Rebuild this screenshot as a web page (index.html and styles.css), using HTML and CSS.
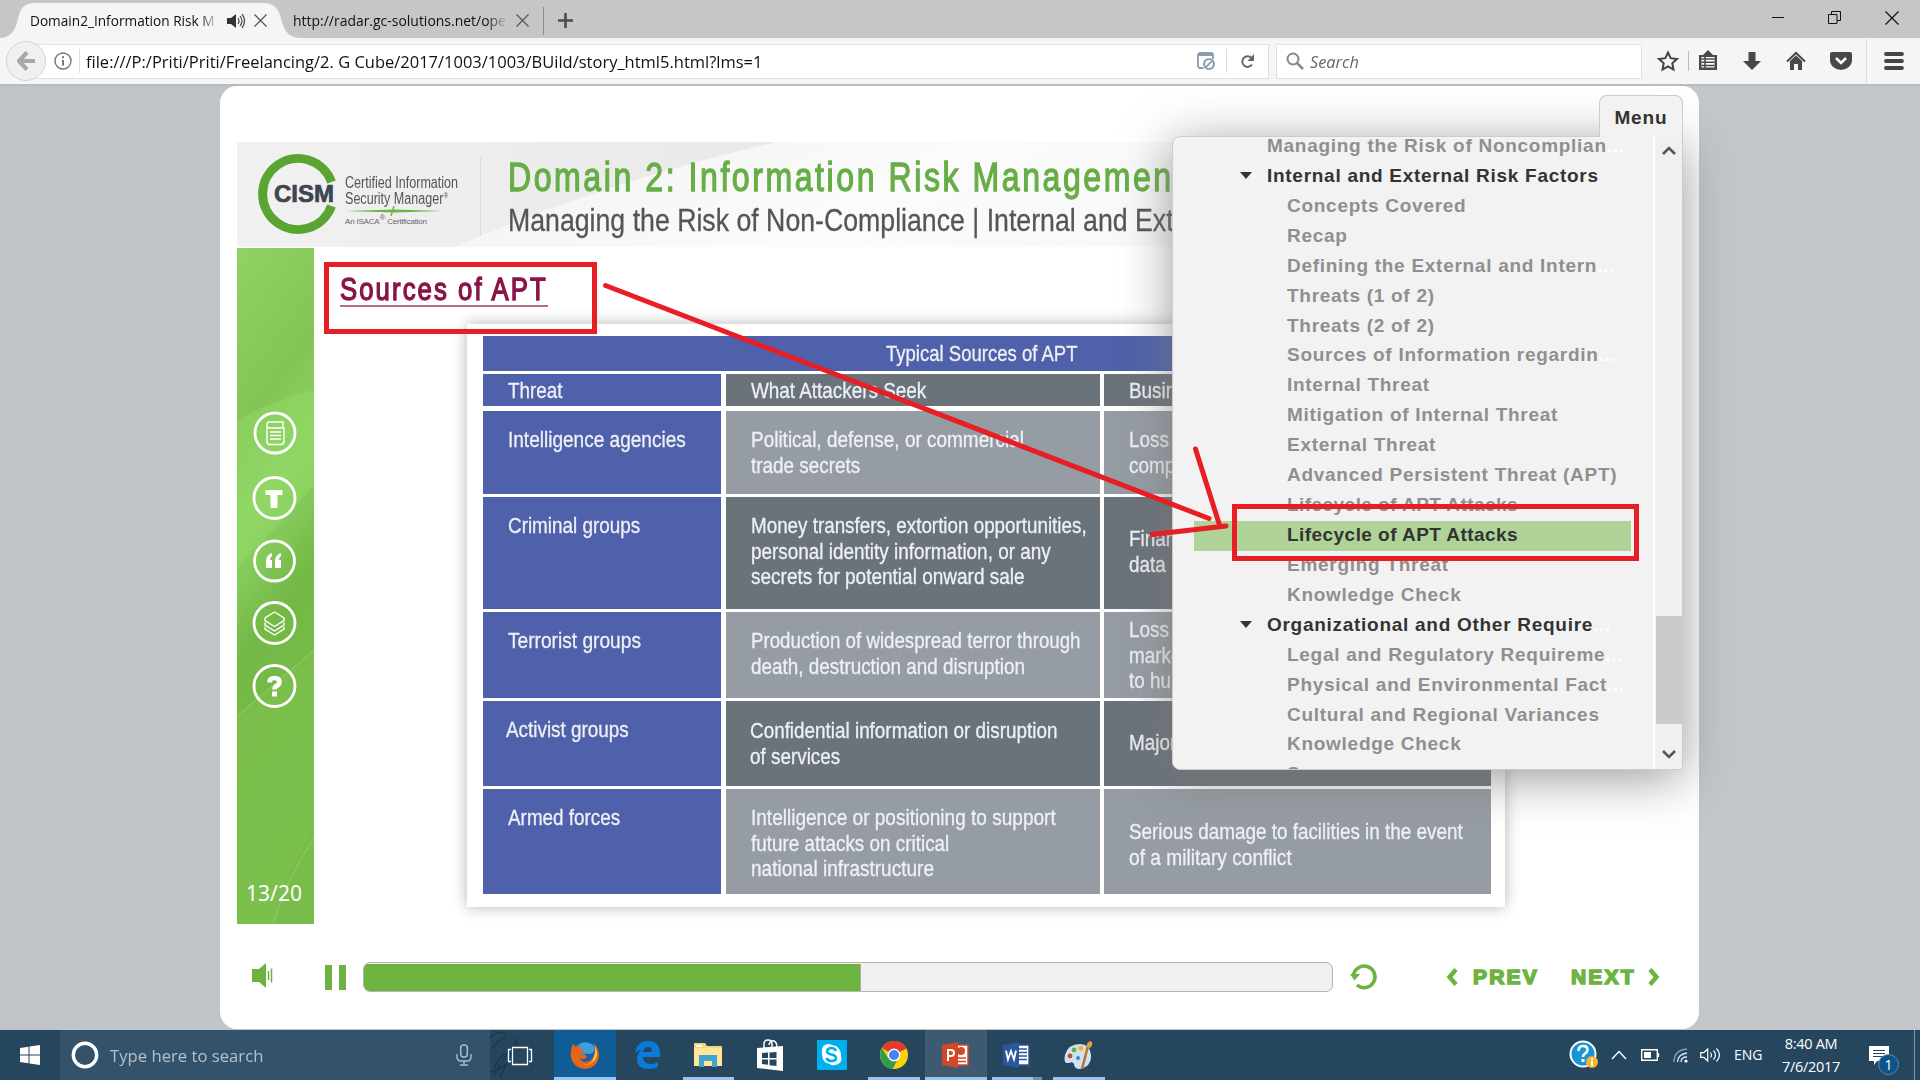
FILE: index.html
```html
<!DOCTYPE html>
<html lang="en">
<head>
<meta charset="utf-8">
<title>Domain2_Information Risk Management</title>
<link rel="stylesheet" href="styles.css">
</head>
<body>
<header class="tabs">
  <svg class="tabshape" width="306" height="35" viewBox="0 0 306 35"><path d="M0 35C14 34 16 24 19 12Q22 0 34 0H264Q276 0 280 12C284 26 286 34 300 35Z" fill="#f5f5f5"/></svg>
  <div class="tab first"><span class="tabtext fade1"><span class="ui" style="--s:.91">Domain2_Information Risk M</span></span>
    <svg width="18" height="14" viewBox="0 0 18 14"><path d="M0 4h4l5-4v14l-5-4H0z" fill="#333"/><path d="M11 4q2 3 0 6M13 2q4 5 0 10M15 0q5 7 0 14" fill="none" stroke="#444" stroke-width="1.2"/></svg>
    <svg class="x" width="13" height="13" viewBox="0 0 13 13"><path d="M.5.5l12 12M12.500.5l-12 12" stroke="#555" stroke-width="1.3"/></svg></div>
  <div class="tab second"><span class="tabtext fade2"><span class="ui" style="--s:.93">http://radar.gc-solutions.net/ope</span></span>
    <svg class="x" width="13" height="13" viewBox="0 0 13 13"><path d="M.5.5l12 12M12.500.5l-12 12" stroke="#555" stroke-width="1.3"/></svg></div>
  <svg class="plus" width="15" height="15" viewBox="0 0 15 15"><path d="M7.500 0v15M0 7.500h15" stroke="#4d4d4d" stroke-width="2.600"/></svg>
  <div class="win">
    <svg width="12" height="12" viewBox="0 0 12 12"><path d="M0 5.500h12" stroke="#111"/></svg>
    <svg width="13" height="13" viewBox="0 0 13 13"><path d="M.5 3.500h8.500v9H.5zM3.500 3.500V.5h9v9H9" fill="none" stroke="#111"/></svg>
    <svg width="14" height="14" viewBox="0 0 14 14"><path d="M.5.5l13 13M13.500.5l-13 13" stroke="#111" stroke-width="1.2"/></svg>
  </div>
</header>
<nav class="toolbar">
  <div class="back"><svg width="18" height="20" viewBox="0 0 18 20"><path d="M10 1.500L2 10l8 8.500M2.500 10H18" fill="none" stroke="#a8a8a8" stroke-width="4.200"/></svg></div>
  <div class="url">
    <svg width="18" height="18" viewBox="0 0 18 18"><circle cx="9" cy="9" r="8" fill="none" stroke="#777" stroke-width="1.400"/><path d="M9 8v5.500M9 4.200v2" stroke="#777" stroke-width="2"/></svg>
    <i class="sep"></i>
    <span class="urltext"><span class="ui" style="--s:.97">file:///P:/Priti/Priti/Freelancing/2. G Cube/2017/1003/1003/BUild/story_html5.html?lms=1</span></span>
    <svg class="push" width="18" height="18" viewBox="0 0 18 18"><path d="M6.500 16H3a2 2 0 0 1-2-2V3a2 2 0 0 1 2-2h11a2 2 0 0 1 2 2v4" fill="none" stroke="#8a9baa" stroke-width="1.800"/><path d="M1 1h15v3H1z" fill="#8a9baa"/><circle cx="12" cy="12" r="5" fill="#f2f5f8" stroke="#8091a1" stroke-width="1.700"/><path d="M9 15l6-6" stroke="#8091a1" stroke-width="1.500"/></svg>
    <i class="sep s2"></i>
    <svg class="reload" width="15" height="15" viewBox="0 0 15 15"><path d="M12 10.500A5.300 5.300 0 1 1 11.500 4" fill="none" stroke="#666" stroke-width="2"/><path d="M14 0v7H7.500z" fill="#666"/></svg>
  </div>
  <div class="search">
    <svg width="18" height="18" viewBox="0 0 18 18"><circle cx="7" cy="7" r="5.500" fill="none" stroke="#888" stroke-width="2"/><path d="M11 11l6 6" stroke="#888" stroke-width="2.500"/></svg>
    <span class="ui" style="--s:.96">Search</span>
  </div>
  <div class="tools">
    <svg width="22" height="22" viewBox="0 0 22 22"><path d="M11 2.500l2.700 5.700 6.200.8-4.600 4.300 1.200 6.200L11 16.400l-5.500 3.100 1.200-6.200L2.100 9l6.200-.8z" fill="none" stroke="#444" stroke-width="2"/></svg>
    <i class="tsep"></i>
    <svg width="20" height="22" viewBox="0 0 20 22"><path d="M1 5h4l5-5 5 5h4v15H1z" fill="#484848"/><path d="M3.500 7h13v10.500h-13z" fill="#fff"/><path d="M3.500 9h13M3.500 12.200h13M3.500 15.400h13M7 7v11" stroke="#484848" stroke-width="1.500"/></svg>
    <svg class="g1" width="18" height="20" viewBox="0 0 18 20"><path d="M5.500 1h7v9H18l-9 9-9-9h5.500z" fill="#484848"/></svg>
    <svg class="g2" width="20" height="20" viewBox="0 0 20 20"><path d="M1 10.500L10 2l9 8.500" fill="none" stroke="#484848" stroke-width="2"/><path d="M4 10l6-5.500 6 5.500v9h-4v-6H8v6H4z" fill="#484848"/></svg>
    <svg class="g3" width="22" height="20" viewBox="0 0 22 20"><path d="M2 1h18q2 0 2 2v6a11 10 0 0 1-22 0V3q0-2 2-2z" fill="#484848"/><path d="M6 7l5 5 5-5" fill="none" stroke="#fff" stroke-width="2.600"/></svg>
    <i class="tsep tall"></i>
    <svg class="g4" width="20" height="18" viewBox="0 0 20 18"><path d="M2 2h16M2 9h16M2 16h16" stroke="#444" stroke-width="3.800" stroke-linecap="round"/></svg>
  </div>
</nav>
<main class="page">
  <section class="player">
    <div class="banner">
      <svg class="sweep" width="1445" height="106" viewBox="0 0 1445 106"><defs><linearGradient id="a" x1="0" x2="1"><stop offset="0" stop-color="#f1f1f1"/><stop offset="1" stop-color="#e9e9e9"/></linearGradient><linearGradient id="f" x1="0" x2="1" y1="0" y2=".15"><stop offset="0" stop-color="#f2f2f2" stop-opacity="0"/><stop offset=".5" stop-color="#fbfbfb"/><stop offset="1" stop-color="#f6f6f6"/></linearGradient></defs><path d="M0 0H1445V106H0z" fill="#f3f3f3"/><path d="M0 0H1445V106H0z" fill="url(#f)"/><path d="M0 0H540C430 25 320 60 215 106H0z" fill="url(#a)"/></svg>
      <svg class="ring" width="86" height="82" viewBox="0 0 86 82"><path d="M74.500 29A35.500 35.500 0 1 0 74.500 53" fill="none" stroke="#5aa532" stroke-width="9"/></svg>
      <b class="cism">CISM</b>
      <div class="cert">
        <span class="cond" style="--s:.785">Certified Information</span><span class="cond" style="--s:.785">Security Manager<sup>®</sup></span>
        <svg width="98" height="10" viewBox="0 0 98 10"><path d="M0 5L49 3.500 98 5 49 6.500z" fill="#6ab645"/><path d="M49 0l-3 10" stroke="#6ab645" stroke-width="1.500"/></svg>
        <i>An ISACA<sup>®</sup> Certification</i>
      </div>
      <i class="rule"></i>
      <div class="titles">
        <h1><span class="cond">Domain 2: Information Risk Management</span></h1>
        <h2><span class="cond">Managing the Risk of Non-Compliance | Internal and External Risk</span></h2>
      </div>
    </div>
    <div class="stage">
      <aside class="side">
        <svg width="77" height="676" viewBox="0 0 77 676"><defs><linearGradient id="g" y2="1" x2=".15"><stop offset="0" stop-color="#90d264"/><stop offset=".27" stop-color="#84c457"/><stop offset=".42" stop-color="#8dd463"/><stop offset=".52" stop-color="#80c555"/><stop offset=".6" stop-color="#74b846"/><stop offset="1" stop-color="#78bc4b"/></linearGradient></defs><path d="M0 0h77v676H0z" fill="url(#g)"/><path d="M0 172q50-25 77-30v95Q30 290 0 320z" fill="#94d968" opacity=".5"/><path d="M0 468Q45 430 77 402v180Q50 625 36 676H0z" fill="#7fc24f" opacity=".55"/>
        <path d="M0 468Q45 430 77 402M77 590Q50 630 36 676" fill="none" stroke="#93cf68" stroke-width="1.200" opacity=".7"/>
        <g fill="none" stroke="#fff" stroke-width="2.800"><circle cx="38" cy="185" r="20"/><circle cx="37.500" cy="250" r="20.500"/><circle cx="37.500" cy="313" r="20"/><circle cx="37.500" cy="375" r="20.500"/><circle cx="37.500" cy="438" r="20.500"/></g>
        <g fill="none" stroke="#fff" stroke-width="1.400"><path d="M30 175.500v18q0 3 3 3h11q3 0 3-3V180H32q-2 0-2-3t2-3h14v6M33 184h11M33 187.500h11M33 191h11"/><path d="M37.500 364l9.500 6v2.500l-9.500 6-9.500-6V370zM28 374.500v2.500l9.500 6 9.500-6v-2.500M28 379v2l9.500 6 9.500-6v-2"/></g>
        <path d="M28.500 242h17v5h-5v13h-7v-13h-5zM29 320v-7q0-6 6-8v3q-2 1-2 4h2v8zM38 320v-7q0-6 6-8v3q-2 1-2 4h2v8z" fill="#fff"/>
        <path d="M32.500 434.500q0-4.500 5-4.500t5 4q0 2.500-3 4-2 1.200-2 3.500" fill="none" stroke="#fff" stroke-width="4.600"/><path d="M35 443.500h5v5h-5z" fill="#fff"/></svg>
        <span class="count">13/20</span>
      </aside>
      <div class="lesson">
        <h3><span class="cond">Sources of APT</span></h3>
        <div class="sheet">
          <div class="grid">
            <div class="c head title"><span class="cond" style="--s:.842">Typical Sources of APT</span></div>
            <div class="c blue head"><span class="cond">Threat</span></div>
            <div class="c dark head"><span class="cond">What Attackers Seek</span></div>
            <div class="c dark head last"><span class="cond">Business</span></div>
            <div class="c blue"><span class="cond" style="--s:.865">Intelligence agencies</span></div>
            <div class="c light"><span class="cond" style="--s:.862">Political, defense, or commercial</span><span class="cond">trade secrets</span></div>
            <div class="c light last"><span class="cond">Loss of</span><span class="cond">compe</span></div>
            <div class="c blue"><span class="cond">Criminal groups</span></div>
            <div class="c dark"><span class="cond" style="--s:.855">Money transfers, extortion opportunities,</span><span class="cond" style="--s:.86">personal identity information, or any</span><span class="cond" style="--s:.864">secrets for potential onward sale</span></div>
            <div class="c dark last mid"><span class="cond">Financ</span><span class="cond">data b</span></div>
            <div class="c blue"><span class="cond" style="--s:.87">Terrorist groups</span></div>
            <div class="c light"><span class="cond" style="--s:.85">Production of widespread terror through</span><span class="cond">death, destruction and disruption</span></div>
            <div class="c light last three"><span class="cond">Loss of</span><span class="cond">market</span><span class="cond">to hum</span></div>
            <div class="c blue shift"><span class="cond">Activist groups</span></div>
            <div class="c dark shift1"><span class="cond">Confidential information or disruption</span><span class="cond">of services</span></div>
            <div class="c dark last mid"><span class="cond">Major</span></div>
            <div class="c blue end"><span class="cond">Armed forces</span></div>
            <div class="c light end"><span class="cond" style="--s:.865">Intelligence or positioning to support</span><span class="cond">future attacks on critical</span><span class="cond" style="--s:.865">national infrastructure</span></div>
            <div class="c light last mid end"><span class="cond">Serious damage to facilities in the event</span><span class="cond" style="--s:.87">of a military conflict</span></div>
          </div>
        </div>
      </div>
    </div>
    <div class="controls">
      <svg class="vol" width="21" height="25" viewBox="0 0 21 25"><path d="M0 6h7l7-6v25l-7-6H0z" fill="#6cb33f"/><path d="M16.500 8v9M19.500 5.500v14" stroke="#6cb33f" stroke-width="1.500"/></svg>
      <svg class="pause" width="21" height="25" viewBox="0 0 21 25"><path d="M0 0h7v25H0zM14 0h7v25h-7z" fill="#6cb33f"/></svg>
      <div class="bar"><div class="fill"></div></div>
      <svg class="replay" width="28" height="28" viewBox="0 0 28 28"><path d="M3.500 12A10.800 10.800 0 1 1 7 22" fill="none" stroke="#6cb33f" stroke-width="3.600"/><path d="M0 11h10l-5.500 6.500z" fill="#6cb33f"/></svg>
      <button><svg width="12" height="18" viewBox="0 0 12 18"><path d="M10 1.500L3.500 9l6.500 7.500" fill="none" stroke="#6cb33f" stroke-width="4.400"/></svg><b>PREV</b></button>
      <button class="next"><b>NEXT</b><svg width="12" height="18" viewBox="0 0 12 18"><path d="M2 1.500L8.500 9 2 16.500" fill="none" stroke="#6cb33f" stroke-width="4.400"/></svg></button>
    </div>
  </section>
  <div class="menu">
    <div class="menutab">Menu</div>
    <div class="panel">
      <ul>
        <li class="sec off">Managing the Risk of Noncomplian<em>...</em></li>
        <li class="sec open">Internal and External Risk Factors</li>
        <li>Concepts Covered</li><li>Recap</li><li>Defining the External and Intern<em>...</em></li><li>Threats (1 of 2)</li><li>Threats (2 of 2)</li><li>Sources of Information regardin<em>...</em></li><li>Internal Threat</li><li>Mitigation of Internal Threat</li><li>External Threat</li><li>Advanced Persistent Threat (APT)</li><li class="tight">Lifecycle of APT Attacks</li>
        <li class="on tight">Lifecycle of APT Attacks</li>
        <li>Emerging Threat</li><li>Knowledge Check</li>
        <li class="sec open">Organizational and Other Require<em>...</em></li>
        <li>Legal and Regulatory Requireme<em>...</em></li><li>Physical and Environmental Fact<em>...</em></li><li>Cultural and Regional Variances</li><li>Knowledge Check</li><li>Summary</li>
      </ul>
      <div class="scroll">
        <svg width="14" height="9" viewBox="0 0 14 9"><path d="M1 8l6-6 6 6" fill="none" stroke="#555" stroke-width="2.600"/></svg>
        <i></i>
        <svg width="14" height="9" viewBox="0 0 14 9"><path d="M1 1l6 6 6-6" fill="none" stroke="#555" stroke-width="2.600"/></svg>
      </div>
    </div>
  </div>
</main>
<footer class="task">
  <div class="start"><svg width="20" height="20" viewBox="0 0 20 20"><path d="M0 3l8.500-1.200v7.700H0zM9.500 1.600L20 0v9.500H9.500zM0 10.500h8.500v7.700L0 17zM9.500 10.500H20V20L9.500 18.400z" fill="#fff"/></svg></div>
  <div class="find"><svg width="28" height="28" viewBox="0 0 28 28"><circle cx="14" cy="14" r="11.700" fill="none" stroke="#fff" stroke-width="3.400"/></svg><span class="ui" style="--s:1.010">Type here to search</span>
    <svg class="mic" width="16" height="22" viewBox="0 0 16 22"><rect x="4.700" y="1" width="6.600" height="12" rx="3" fill="none" stroke="#aebbc5" stroke-width="1.500"/><path d="M1 10v3q0 4 4 4h6q4 0 4-4v-3M8 17v4M4 21h8" fill="none" stroke="#aebbc5" stroke-width="1.400"/></svg></div>
  <div class="apps">
    <div class="app view"><svg width="64" height="50" viewBox="0 0 64 50"><path d="M0 8q8-9 16-4M2 18q8-9 14-12M4 46q7-14 18-30M0 42q8 0 16-8M14 24q-8 8-10 16M10 48L28 8" fill="none" stroke="#1a3549" stroke-width="1.100"/><path d="M22.500 17.500h15v17h-15zM21 19.500h-2.500v12H21M39 19.500h2.500v12H39" fill="none" stroke="#fff" stroke-width="1.300"/></svg></div>
    <div class="app active run"><svg width="30" height="30" viewBox="0 0 30 30"><circle cx="15" cy="14.500" r="13" fill="#1d5fa8"/><path d="M8 5q8-6 16 1 3 6-4 8-5-1-9 1z" fill="#3f9fd8"/><path d="M3 4Q0 10 1 17q2 11 14 12 13-1 14-14Q28 6 23 3q4 6 1 12-2 7-9 7-4-1-5-4 3 2 6 0 2-2-1-3l-4-1q0-3 4-4Q9 8 7 5L6 7z" fill="#e4661a"/><path d="M25 6q4 8 0 14-5 6-12 5 9 0 11-8 2-6 1-11z" fill="#ffcb3a"/></svg></div>
    <div class="app"><svg width="26" height="28" viewBox="0 0 26 28"><path d="M1 12Q3 0 14 0q12 0 12 13v3H9q0 7 8 7 4 0 7-2v5q-4 2-9 2Q3 28 3 18q0-7 6-10-5 1-8 4zM9 11h9q0-5-4-5t-5 5z" fill="#0a7bd8"/></svg></div>
    <div class="app run short"><svg width="28" height="24" viewBox="0 0 28 24"><path d="M0 0h11l2 3h14q1 0 1 1v19H0z" fill="#f5d77b"/><path d="M0 5h28v18H0z" fill="#ffe699"/><path d="M2 2h6v2H2z" fill="#fff"/><path d="M5 12h18v12h-5v-6h-8v6H5z" fill="#41a5cf"/></svg></div>
    <div class="app"><svg width="28" height="32" viewBox="0 0 28 32"><path d="M8 9V5q0-4 4-4t4 4v4M13 6q1-5 5-4 3 1 3 7" fill="none" stroke="#fff" stroke-width="1.500"/><path d="M1 9l26-2v25L1 29z" fill="#fff"/><path d="M6 14l6-.5V19H6zM13.500 13.400l7-.5V19h-7zM6 20.500h6v5.300L6 25zM13.500 20.500h7V27l-7-.8z" fill="#25465d"/></svg></div>
    <div class="app"><svg width="30" height="30" viewBox="0 0 30 30"><path d="M0 0h30v30H0z" fill="#00aff0"/><path d="M8 5q4-2 7 0 9 1 9 11 2 8-6 9-4 1-5-1-8-1-8-10Q4 7 8 5z" fill="#fff"/><path d="M19 11q-1-3-5-3-4 .5-4 3.500 0 2 4.500 3t4.500 3.500q0 3-4.500 3-4 0-5-3" fill="none" stroke="#00aff0" stroke-width="2.600"/></svg></div>
    <div class="app run short"><svg width="28" height="28" viewBox="0 0 28 28"><circle cx="14" cy="14" r="14" fill="#fcd209"/><path d="M14 14L2 7A14 14 0 0 1 26.500 7.500z" fill="#e23b2e"/><path d="M14 0a14 14 0 0 1 12.500 7.500H14z" fill="#e23b2e"/><path d="M2 7a14 14 0 0 0 10.500 21l6-11L8 17z" fill="#2e9e4b"/><circle cx="14" cy="14" r="6.400" fill="#fff"/><circle cx="14" cy="14" r="5" fill="#4285f4"/></svg></div>
    <div class="app lit run"><svg width="28" height="26" viewBox="0 0 28 26"><path d="M13 3h13v20H13z" fill="#fff" stroke="#d24726" stroke-width="1.500"/><path d="M15 16h9M15 19.500h9" stroke="#d24726" stroke-width="1.600"/><circle cx="19" cy="9" r="4" fill="#d24726"/><path d="M0 3l16-3v26L0 23z" fill="#d24726"/><path d="M6 19V8h3q3 0 3 3t-3 3H6" fill="none" stroke="#fff" stroke-width="2"/></svg></div>
    <div class="app run word"><svg width="28" height="26" viewBox="0 0 28 26"><path d="M13 3h13v20H13z" fill="#fff" stroke="#2b579a" stroke-width="1.500"/><path d="M15 7h9M15 10.500h9M15 14h9M15 17.500h9" stroke="#2b579a" stroke-width="1.600"/><path d="M0 3l16-3v26L0 23z" fill="#2b579a"/><path d="M3 8.500l2 9L8 9l3 8.500 2-9" fill="none" stroke="#fff" stroke-width="1.800"/></svg></div>
    <div class="app run short"><svg width="30" height="28" viewBox="0 0 30 28"><path d="M16 3Q4 3 1 14q-2 9 4 8 4-2 5 1 0 5 6 5 12-3 11-14-1-11-11-11z" fill="#cfe3ef"/><circle cx="6" cy="15" r="2.400" fill="#d9432e"/><circle cx="10" cy="9" r="2.400" fill="#62b145"/><circle cx="17" cy="7.500" r="2.400" fill="#f0b429"/><circle cx="14" cy="17" r="2" fill="#3c8ac9"/><path d="M18 28L24 5" stroke="#b87333" stroke-width="2.500"/><path d="M23 6q-1-5 4-6 3 3-1 7z" fill="#e2a24d"/></svg></div>
  </div>
  <div class="tray">
    <svg width="30" height="30" viewBox="0 0 30 30"><circle cx="14" cy="14" r="12.500" fill="#1397d5" stroke="#fff" stroke-width="2"/><path d="M9.500 11q0-5 4.500-5t4.500 4q0 2-2.500 3.500-2 1.500-2 3.500" fill="none" stroke="#fff" stroke-width="2.600"/><path d="M12.500 19h3v3h-3z" fill="#fff"/><circle cx="23" cy="22" r="6" fill="#f7b52c"/><path d="M23 21v5M23 18v2" stroke="#fff" stroke-width="2"/></svg>
    <svg class="t1" width="16" height="10" viewBox="0 0 16 10"><path d="M1 9l7-7.500L15 9" fill="none" stroke="#fff" stroke-width="1.400"/></svg>
    <svg class="t2" width="19" height="12" viewBox="0 0 19 12"><path d="M.7.700h15.600v10.600H.7zM17.500 4v4" fill="none" stroke="#fff" stroke-width="1.400"/><path d="M3 3h7v6H3z" fill="#fff"/></svg>
    <svg class="t3" width="16" height="15" viewBox="0 0 16 15"><path d="M1 14Q1 2 14 1" fill="none" stroke="#8ba0ae" stroke-width="1.300"/><path d="M4.500 14Q5 6 14 5M8 14q0-5 6-5" fill="none" stroke="#dfe6eb" stroke-width="1.300"/><circle cx="13" cy="13" r="1.600" fill="#fff"/></svg>
    <svg class="t4" width="21" height="14" viewBox="0 0 21 14"><path d="M.7 4.700h3l4-3.700v12L3.700 9.300h-3zM10.500 4.500q2 2.500 0 5M13.500 2.500q4 4.500 0 9M16.500.5q6 6.500 0 13" fill="none" stroke="#fff" stroke-width="1.200"/></svg>
    <span class="eng">ENG</span>
    <span class="clock">8:40 AM<br>7/6/2017</span>
    <div class="note"><svg width="20" height="19" viewBox="0 0 20 19"><path d="M0 0h20v15H8l-3 4v-4H0z" fill="#fff"/><path d="M4 4.500h12M4 7.500h12M4 10.500h12" stroke="#25465d" stroke-width="1.200"/></svg><b>1</b></div>
  </div>
</footer>
<svg class="marks" width="1920" height="1080" viewBox="0 0 1920 1080"><g fill="none" stroke="#e81e25" stroke-width="5"><path d="M326.500 264.500h268v67h-268zM1234.500 506.500h402v52h-402z"/><path d="M605.500 285.500L1209 518.500M1195.500 449L1219.500 525M1152 534.500L1226 526" stroke-linecap="round"/></g></svg>
</body>
</html>
```
FILE: styles.css
```css
* { box-sizing: border-box; }
body { margin: 0; width: 1920px; height: 1080px; overflow: hidden; display: flex; flex-direction: column; position: relative; font-family: "Liberation Sans", Arial, sans-serif; background: #c1c6ca; }
svg { display: block; flex: none; }
h1, h2, h3, ul { margin: 0; padding: 0; font-weight: 400; }
.ui { display: inline-block; font-family: "Open Sans", "Noto Sans", sans-serif; white-space: nowrap; transform: scaleX(var(--s, .9)); transform-origin: 0 50%; }
.cond { display: block; width: max-content; white-space: nowrap; transform: scaleX(var(--s, .858)); transform-origin: 0 50%; }

/* tab strip */
.tabs { height: 38px; background: #c6c6c6; display: flex; align-items: center; position: relative; padding-top: 3px; flex: none; }
.tabshape { position: absolute; left: 0; bottom: 0; }
.tab { display: flex; align-items: center; position: relative; font-size: 15px; color: #111; }
.first { margin-left: 30px; width: 237px; }
.second { margin-left: 26px; width: 251px; height: 28px; border-right: 1px solid #8e8e8e; }
.tabtext { width: 189px; overflow: hidden; white-space: nowrap; margin-right: 8px; margin-top: -2px; }
.second .tabtext { width: 215px; }
.fade1, .fade2 { -webkit-mask: linear-gradient(90deg, #000 90%, transparent); mask: linear-gradient(90deg, #000 90%, transparent); }
.first .x { margin-left: 9px; }
.plus { margin-left: 14px; }
.win { margin-left: auto; margin-right: 21px; display: flex; align-items: center; gap: 44px; margin-top: -6px; }

/* toolbar */
.toolbar { height: 48px; flex: none; background: #f5f5f5; border-bottom: 2px solid #b9bcbe; display: flex; align-items: center; padding-left: 6px; }
.back { width: 40px; height: 40px; border-radius: 50%; background: #f0f0f0; border: 1px solid #d4d4d4; display: grid; place-items: center; z-index: 1; flex: none; }
.url { width: 1243px; height: 35px; margin-left: -20px; background: #fff; border: 1px solid #e1e1e1; display: flex; align-items: center; padding-left: 27px; }
.sep { width: 1px; height: 24px; background: #ddd; margin: 0 6px 0 7px; flex: none; }
.urltext { width: 700px; font-size: 17px; color: #111; }
.push { margin-left: auto; }
.sep.s2 { margin: 0 13px 0 11px; }
.reload { margin-right: 13px; }
.search { width: 366px; height: 35px; margin-left: 7px; background: #fff; border: 1px solid #e1e1e1; display: flex; align-items: center; gap: 6px; padding-left: 9px; font-size: 17px; font-style: italic; color: #666; }
.tools { display: flex; align-items: center; margin-left: 15px; }
.tsep { width: 1px; height: 20px; background: #bbb; margin: 0 9px 0 9px; }
.tsep.tall { height: 44px; background: #ddd; margin: 0 17px 0 14px; }
.g1 { margin-left: 25px; }
.g2 { margin-left: 25px; }
.g3 { margin-left: 24px; }

/* course player */
.page { height: 944px; flex: none; padding-left: 220px; position: relative; background: linear-gradient(90deg, #bfc4c8, #c3c7ca); }
.player { width: 1479px; height: 943px; background: #fff; border-radius: 17px; padding: 56px 17px 0; overflow: hidden; }
.banner { height: 105px; display: flex; position: relative; overflow: hidden; }
.sweep { position: absolute; inset: 0; }
.ring { position: relative; margin: 11px 0 0 20px; }
.cism { position: relative; width: 62px; margin: 38px 9px 0 -69px; font-size: 24px; line-height: 28px; letter-spacing: 0; color: #3d4650; -webkit-text-stroke: .7px #3d4650; }
.cert { position: relative; width: 135px; padding-top: 33px; font-size: 16px; line-height: 15.500px; color: #50575c; }
.cert sup { font-size: 8px; line-height: 0; }
.cert i { display: block; width: max-content; font-size: 8px; font-style: normal; line-height: 12px; color: #666; letter-spacing: -.2px; }
.rule { width: 1px; height: 79px; margin-top: 15px; background: #dcdcdc; position: relative; }
.titles { position: relative; margin-left: 27px; }
h1 { font-size: 40px; line-height: 46px; margin-top: 12px; color: #66ae45; letter-spacing: 3.200px; -webkit-text-stroke: 1.300px #66ae45; }
h1 .cond { --s: .801; }
h2 { font-size: 32px; line-height: 37px; margin-top: 2px; color: #555; -webkit-text-stroke: .3px #555; }
h2 .cond { --s: .834; }
.stage { display: flex; height: 677px; padding-top: 1px; }
.side { width: 77px; height: 676px; position: relative; }
.count { position: absolute; left: 0; width: 74px; bottom: 15px; text-align: center; color: #fff; font: 21px/32px "Noto Sans", sans-serif; }
.lesson { padding: 25px 0 0 26px; }
h3 { width: 208px; height: 34px; font-size: 32px; line-height: 32px; color: #8a1548; letter-spacing: 2.600px; border-bottom: 2px solid #b56b8b; -webkit-text-stroke: 1.400px #8a1548; }
h3 .cond { --s: .803; }
.sheet { width: 1038px; height: 583px; margin: 17px 0 0 127px; padding: 12px 16px; background: #fff; box-shadow: 0 0 14px rgba(0,0,0,.3); }
.grid { display: grid; width: 1008px; grid-template-columns: 243px 378px 387px; grid-template-rows: 38px 37px 86px 115px 89px 88px 105px; }
.c { background-clip: padding-box; border: solid #fff; border-width: 0 4px 3px 0; padding: 16px 0 0 25px; font-size: 22px; line-height: 25.500px; color: #eef0f4; -webkit-text-stroke: .3px #eef0f4; overflow: hidden; }
.blue { background-color: #4f61ab; border-right-width: 5px; }
.dark { background-color: #6a727a; }
.light { background-color: #969ca4; }
.last { border-right: 0; }
.head { padding-top: 4px; border-bottom-width: 5px; }
.title { grid-column: 1 / 4; background-color: #4f61ab; border-right: 0; border-bottom-width: 3px; padding: 5px 0 0 403px; }
.mid { padding-top: 29px; }
.three { padding-top: 5px; }
.shift { padding-left: 23px; }
.shift1 { padding: 17px 0 0 24px; }
.end { border-bottom: 0; }
.end.mid { padding-top: 30px; }
.controls { display: flex; align-items: center; height: 30px; margin-top: 38px; padding-left: 15px; }
.vol { margin-top: -3px; }
.pause { margin-left: 52px; }
.bar { width: 970px; height: 30px; margin-left: 17px; border: 1px solid #b4b4b4; border-radius: 7px; background: #f1f1f1; overflow: hidden; padding-top: 1px; }
.fill { width: 497px; height: 27px; background: #6cb33f; border-right: 1px solid #aaa; }
.replay { margin-left: 17px; }
.controls button { border: 0; background: none; padding: 0; margin-left: 68px; display: flex; align-items: center; gap: 15px; color: #6cb33f; font: 900 21px "Liberation Sans", sans-serif; -webkit-text-stroke: 1.600px #6cb33f; letter-spacing: 2.200px; }
.controls .next { margin-left: 32px; gap: 12px; }

/* course menu */
.menu { position: absolute; left: 1172px; top: 9px; width: 511px; }
.menutab { width: 84px; height: 42px; margin-left: auto; background: #f2f2f2; border: 1px solid #ccc; border-bottom: 0; border-radius: 8px 8px 0 0; text-align: center; font: bold 19px/44px "Liberation Sans", sans-serif; letter-spacing: .9px; color: #333; position: relative; z-index: 1; }
.panel { height: 634px; margin-top: -1px; border: 1px solid #ccc; border-radius: 8px 0 0 8px; background: #f2f2f2; box-shadow: 0 8px 50px rgba(120,120,120,.75); display: flex; overflow: hidden; }
.panel ul { width: 482px; margin-top: -5px; border-right: 2px solid #fff; list-style: none; padding-left: 21px; }
.panel li { width: 437px; height: 29.930px; padding-left: 93px; white-space: nowrap; font: bold 19px/27px "Liberation Sans", sans-serif; letter-spacing: .720px; color: #8f8f8f; }
.panel .sec { padding-left: 73px; color: #333; }
.panel .off { color: #8f8f8f; }
.panel .on { background: #b0d399; color: #333; }
.panel .tight { letter-spacing: .45px; }
.panel em { color: #fff; font-style: normal; }
.open::before { content: ""; float: left; margin: 10px 0 0 -27px; border: solid transparent; border-width: 7px 6px 0; border-top-color: #333; }
.scroll { flex: 1; background: #f0f0f0; display: flex; flex-direction: column; align-items: center; padding: 9px 0 10px; }
.scroll i { width: 26px; height: 108px; background: #cbcbcb; margin: 461px 0 26px; flex: none; }

/* taskbar */
.task { height: 50px; flex: none; background: #25465d; display: flex; color: #fff; }
.start { width: 60px; display: grid; place-items: center; }
.find { width: 430px; background: #34536a; display: flex; align-items: center; padding-left: 11px; font-size: 16.500px; color: #b4c0c9; gap: 11px; }
.mic { margin: 0 18px 0 auto; }
.apps { display: flex; }
.app { width: 61.800px; display: grid; place-items: center; position: relative; }
.view { width: 64px; }
.active { background: #0f5c96; }
.lit { background: #3e5a70; }
.run::after { content: ""; position: absolute; left: 0; right: 0; bottom: 0; height: 3px; background: #99c5f0; }
.short::after { left: 5px; right: 5px; }
.word::after { left: 5px; right: 6px; border-right: 9px solid #7392ae; }
.tray { margin-left: auto; display: flex; align-items: center; font: 14px/22px "Open Sans", "Noto Sans", sans-serif; padding-right: 5px; border-right: 1px solid #8497a5; margin-right: 5px; }
.t1 { margin-left: 12px; }
.t2 { margin-left: 14px; }
.t3 { margin-left: 13px; }
.t4 { margin-left: 11px; }
.eng { margin-left: 13px; width: 30px; font-size: 14px; }
.clock { width: 66px; margin-left: 14px; text-align: center; font-size: 14.500px; letter-spacing: -.3px; line-height: 23px; }
.note { position: relative; margin: 0 20px 0 25px; }
.note b { position: absolute; left: 9px; top: 8px; width: 21px; height: 21px; border-radius: 50%; background: #0f5489; border: 1px solid #5b8db5; text-align: center; font-weight: 400; font-size: 14px; line-height: 19px; }
.marks { position: absolute; left: 0; top: 0; pointer-events: none; }
```
